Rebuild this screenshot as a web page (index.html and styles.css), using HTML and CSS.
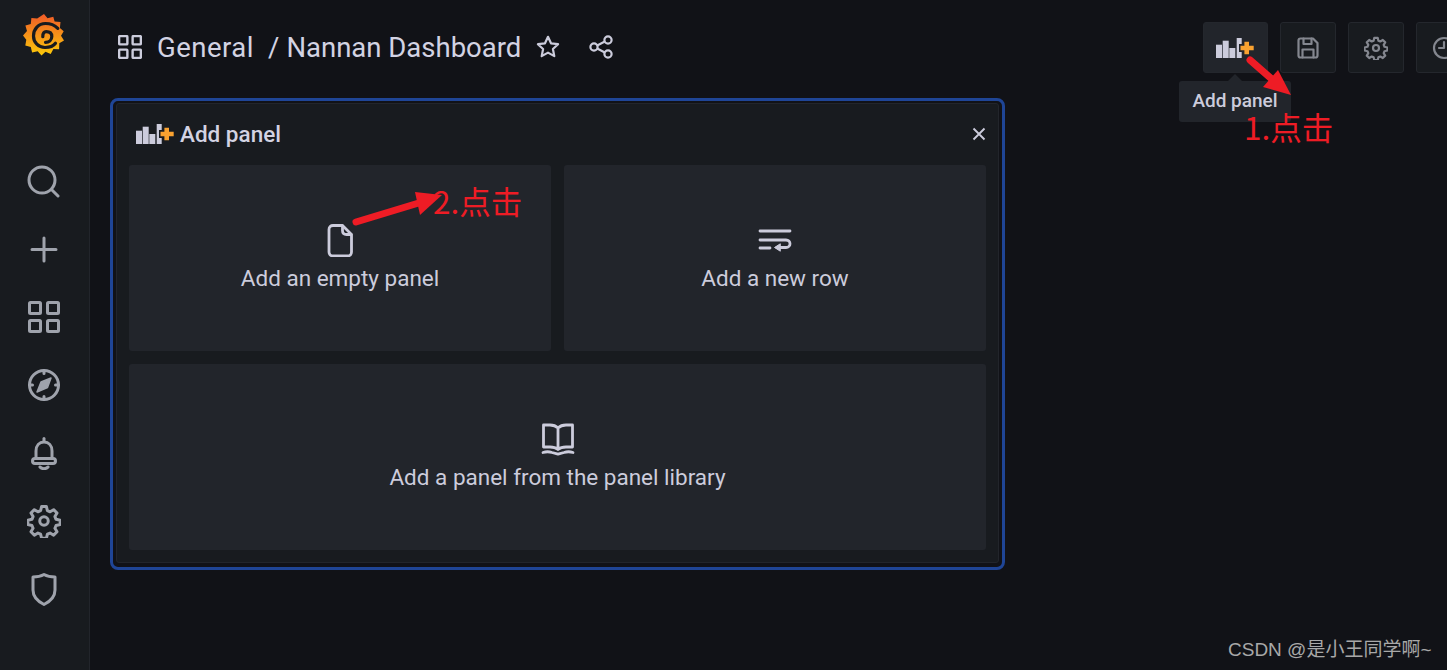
FILE: index.html
```html
<!DOCTYPE html>
<html lang="en">
<head>
<meta charset="utf-8">
<title>Nannan Dashboard</title>
<link rel="stylesheet" href="styles.css">
</head>
<body>
<svg class="defs" width="0" height="0" aria-hidden="true">
  <defs>
    <linearGradient id="sun" x1="0" y1="0" x2="0" y2="1">
      <stop offset="0" stop-color="#f05a28"/>
      <stop offset="1" stop-color="#fbca0a"/>
    </linearGradient>
    <symbol id="grid" viewBox="0 0 32 32">
      <rect x="1.500" y="1.500" width="11" height="11" rx="1"/><rect x="19.500" y="1.500" width="11" height="11" rx="1"/>
      <rect x="1.500" y="19.500" width="11" height="11" rx="1"/><rect x="19.500" y="19.500" width="11" height="11" rx="1"/>
    </symbol>
    <symbol id="gear" viewBox="0 0 24 24">
      <circle cx="12" cy="12" r="3"/>
      <path d="M10.300 1.800h3.400l.7 2.900 1.900.8 2.500-1.500 2.400 2.400-1.500 2.500.8 1.900 2.900.7v3l-2.900.7-.8 1.900 1.500 2.500-2.400 2.400-2.500-1.500-1.900.8-.7 2.900h-3.400l-.7-2.900-1.900-.8-2.500 1.500-2.400-2.400 1.500-2.500-.8-1.900-2.900-.7v-3l2.900-.7.8-1.900-1.500-2.500 2.400-2.400 2.500 1.500 1.900-.8z"/>
    </symbol>
    <symbol id="addpanel" viewBox="0 0 38 20">
      <g class="bars">
        <rect x="0" y="6.700" width="6" height="13.300"/><rect x="6.700" y="2.700" width="6" height="17.300"/>
        <rect x="13.300" y="10" width="6" height="10"/><path d="M20.700 0h5v6h-2.700v8h2.700v6h-5z"/>
      </g>
      <path class="plus" d="M28.400 3.800h4.600v3.900h4.700v4.600h-4.700v3.900h-4.600v-3.900h-3.900v-4.600h3.900z"/>
    </symbol>
  </defs>
</svg>

<nav class="sidebar">
  <div class="logo">
    <svg width="42" height="44" viewBox="0 0 42 44">
      <path fill="url(#sun)" d="M21 0l3.500 4.200 5.800-1.500 1.300 4.800 5.900.5-.6 6 3.800 3.300-2.700 4.500 3 4.800-4.700 2.700-.2 5.900-5.700-.2-2.700 5-5.200-2.300-4 3.800-3.800-4.300-5.600 1.300-1.300-5.500-5.500-1.500 1-5.700L0 21.500l4-4.400-1.600-5.600 5.400-1.600.6-6 5.800.6z"/>
      <path class="spiral" d="M34.800 14.300C31 10.500 26.500 9.500 22.500 9.500 15.500 9.500 10.500 15 10.500 22c0 6.500 5 11.500 11.500 11.500 4.500 0 8.500-1.500 10.500-4.200"/>
      <path class="spiral" d="M19.800 22.700c0-3.200 1.200-5 3.400-5 3.300 0 5.600 1.500 5.600 4.800 0 3.500-2.800 5.800-6.300 5.800"/>
    </svg>
  </div>
  <ul class="nav">
    <li><svg class="ico" viewBox="0 0 34 34"><circle cx="15" cy="16" r="13"/><path d="M25 26l6 6"/></svg></li>
    <li><svg class="ico" viewBox="0 0 34 34"><path d="M17 6v23M5 17.500h24"/></svg></li>
    <li><svg class="ico ico-grid"><use href="#grid"/></svg></li>
    <li><svg class="ico" viewBox="0 0 34 34"><circle cx="17" cy="17" r="14.500"/><path d="M17 2.500v3M17 28.500v3M2.500 17h3M28.500 17h3"/><path class="solid" d="M24 10l-3.500 9.500L10 24l4-10z"/></svg></li>
    <li><svg class="ico" viewBox="0 0 34 34"><path d="M17 2.500v3"/><path d="M9 22.500V15c0-5.500 3.300-9 8-9s8 3.500 8 9v7.500"/><rect x="5.500" y="22.500" width="23" height="5" rx="2.500"/><path d="M13 31c1 1.300 2.500 1.700 4 1.700s3-.4 4-1.700"/></svg></li>
    <li><svg class="ico ico-gear"><use href="#gear"/></svg></li>
    <li><svg class="ico" viewBox="0 0 34 34"><path d="M17 2.500c3 1.700 6.500 2.500 11 2.500v13c0 6.500-4 11-11 14.500C10 29 6 24.500 6 18V5c4.500 0 8-.8 11-2.500z"/></svg></li>
  </ul>
</nav>

<main class="main">
  <header class="topbar">
    <div class="crumbs">
      <svg class="crumb-ico"><use href="#grid"/></svg>
      <h1 class="title"><span class="folder">General</span><span class="slash">/</span>Nannan Dashboard</h1>
      <svg class="act star" viewBox="0 0 24 24"><path d="M12 1.800l3 6.500 7.100.9-5.200 4.800 1.400 7.100L12 17.600l-6.300 3.500 1.400-7.100L1.900 9.200 9 8.300z"/></svg>
      <svg class="act share" viewBox="0 0 24 24"><circle cx="19" cy="5" r="3.600"/><circle cx="5" cy="12" r="3.600"/><circle cx="19" cy="19" r="3.600"/><path d="M8.200 10.400l7.600-3.800M8.200 13.600l7.600 3.800"/></svg>
    </div>
    <div class="tools">
      <button class="tbtn tbtn-add" type="button">
        <svg class="addico"><use href="#addpanel"/></svg>
        <span class="tooltip"><span class="tooltip-text">Add panel</span></span>
      </button>
      <button class="tbtn" type="button"><svg class="tico" viewBox="0 0 24 24"><path d="M2.500 4.500c0-1.200.8-2 2-2h12.500l4.500 4.500v12.500c0 1.200-.8 2-2 2h-15c-1.200 0-2-.8-2-2z"/><path d="M7.500 2.500v5.500h8V2.500M6.500 21.500v-8h11v8"/></svg></button>
      <button class="tbtn" type="button"><svg class="tico"><use href="#gear"/></svg></button>
      <button class="tbtn" type="button"><svg class="tico" viewBox="0 0 24 24"><circle cx="12" cy="12" r="10"/><path d="M12 6v6h-5"/></svg></button>
    </div>
  </header>

  <section class="focus">
    <div class="panel">
      <div class="panel-head">
        <svg class="addico"><use href="#addpanel"/></svg>
        <span class="panel-title">Add panel</span>
        <svg class="close" viewBox="0 0 14 14"><path d="M1.500 1.500l11 11M12.500 1.500l-11 11"/></svg>
      </div>
      <div class="cards">
        <div class="card">
          <svg class="cico" viewBox="0 0 34 34"><path d="M6 6.500c0-2.500 1.800-4 4-4h9.500l9 9v17.500c0 2.500-1.800 4-4 4H10c-2.200 0-4-1.500-4-4z"/><path d="M19.500 3v4.500c0 2.500 1.500 4 4 4h4.500"/></svg>
          <span>Add an empty panel</span>
        </div>
        <div class="card">
          <svg class="cico" viewBox="0 0 34 34"><path d="M2 8h30M2 17h26c2.500 0 4 1.700 4 3.700s-1.500 3.800-4 3.800h-9M2 25h10"/><path class="solid" d="M22 21l-5.500 3.500L22 28z"/></svg>
          <span>Add a new row</span>
        </div>
        <div class="card card-wide">
          <svg class="cico" viewBox="0 0 34 34"><path d="M17 6c-2-2-5-3-8-3H2.500v22H9c3 0 6 .8 8 2.500 2-1.700 5-2.500 8-2.500h6.500V3H25c-3 0-6 1-8 3zM17 6v21.500"/><path d="M2 30.500c3-1 6-1 9 0l6 1.700 6-1.700c3-1 6-1 9 0"/></svg>
          <span>Add a panel from the panel library</span>
        </div>
      </div>
    </div>
  </section>
</main>

<div class="note note-one">1.点击</div>
<div class="note note-two">2.点击</div>
<svg class="marks" width="1447" height="670" viewBox="0 0 1447 670">
  <path class="shaft" d="M1250 60l24 21"/>
  <path class="head" d="M1291 95l-13-25-15 17z"/>
  <path class="shaft" d="M356 222l66-20"/>
  <path class="head" d="M442 195l-27-3 5 23z"/>
</svg>
<div class="watermark">CSDN @是小王同学啊~</div>
</body>
</html>
```
FILE: styles.css
```css
* { box-sizing: border-box; }
html, body { margin: 0; height: 100%; }
body {
  width: 1447px;
  height: 670px;
  overflow: hidden;
  position: relative;
  display: flex;
  background: #111217;
  color: #ccccdc;
  font-family: Roboto, "Noto Sans CJK SC", sans-serif;
}
.defs { position: absolute; }

.sidebar {
  flex: 0 0 90px;
  background: #181b1f;
  border-right: 1px solid #22252b;
  padding-right: 1px;
  display: flex;
  flex-direction: column;
  align-items: center;
}
.logo { height: 147px; padding-top: 14px; }
.logo svg { display: block; }
.spiral { fill: none; stroke: #181b1f; stroke-width: 3.200; stroke-linecap: round; }
.nav { list-style: none; margin: 0; padding: 0; }
.nav li { height: 68px; width: 68px; display: flex; align-items: center; justify-content: center; }
.ico { width: 34px; height: 34px; fill: none; stroke: #9fa3ac; stroke-width: 3; stroke-linecap: round; stroke-linejoin: round; }
.ico-grid { width: 32px; height: 32px; }
.ico-gear { stroke-width: 2.100; }
.ico .solid { fill: #9fa3ac; stroke-width: 1.500; }

.main { flex: 1; min-width: 0; padding: 22px 0 0 20px; }
.topbar { display: flex; height: 51px; }
.crumbs { flex: 0 0 1093px; display: flex; align-items: center; padding: 0 0 2px 8px; }
.crumb-ico { width: 24px; height: 24px; fill: none; stroke: #ccccdc; stroke-width: 3.200; margin-right: 15px; }
.title { margin: 2px 0 0; font-size: 27.500px; line-height: 34px; font-weight: 400; white-space: nowrap; color: #d3d3e3; }
.folder { letter-spacing: .5px; }
.slash { margin: 0 7px 0 14px; }
.act { fill: none; stroke: #ccccdc; stroke-width: 2.200; stroke-linejoin: round; }
.star { width: 24px; height: 24px; margin-left: 15px; }
.share { width: 24px; height: 24px; margin-left: 29px; }

.tools { display: flex; gap: 12px; flex: none; }
.tbtn {
  position: relative;
  width: 56px;
  height: 51px;
  flex: none;
  padding: 0;
  display: flex;
  align-items: center;
  justify-content: center;
  background: #181b1f;
  border: 1px solid #24272d;
  border-radius: 3px;
}
.tbtn-add { width: 65px; padding-right: 2px; background: #22252b; }
.addico { width: 38px; height: 20px; display: block; flex: none; }
.bars { fill: #ccccdc; }
.plus { fill: #f9a230; }
.tico { width: 24px; height: 24px; fill: none; stroke: #84878f; stroke-width: 2.200; stroke-linejoin: round; stroke-linecap: round; }
.tooltip {
  position: absolute;
  left: -25px;
  top: 58px;
  width: 112px;
  height: 41px;
  background: #22252b;
  border-radius: 3px;
  padding-bottom: 2px;
  display: flex;
  align-items: center;
  justify-content: center;
}
.tooltip-text { color: #ccccdc; font: 500 19px/20px Roboto, sans-serif; }
.tooltip::before {
  content: "";
  position: absolute;
  left: 49px;
  top: -7px;
  border-left: 7px solid transparent;
  border-right: 7px solid transparent;
  border-bottom: 7px solid #22252b;
}

.focus {
  margin-top: 25px;
  width: 895px;
  height: 472px;
  padding: 2px 3px 4px;
  border: 3px solid #1f4596;
  border-radius: 8px;
}
.panel {
  height: 100%;
  background: #181b1f;
  border: 1px solid #22252b;
  border-radius: 3px;
  padding: 0 12px;
}
.panel-head { display: flex; align-items: center; height: 61px; padding: 0 0 1px 7px; }
.panel-title { font-size: 22.500px; font-weight: 500; margin-left: 6px; color: #d3d3e3; }
.close { width: 14px; height: 14px; margin-left: auto; fill: none; stroke: #ccccdc; stroke-width: 1.900; }

.cards { display: grid; grid-template-columns: 422px 422px; grid-auto-rows: 186px; gap: 13px; }
.card {
  background: #22252b;
  border-radius: 3px;
  display: flex;
  flex-direction: column;
  align-items: center;
  justify-content: center;
  gap: 8px;
  padding-bottom: 2px;
  font-size: 22.500px;
  line-height: 26px;
}
.card-wide { grid-column: 1 / 3; }
.cico { width: 34px; height: 34px; fill: none; stroke: #ccccdc; stroke-width: 2.800; stroke-linecap: round; stroke-linejoin: round; }
.cico .solid { fill: #ccccdc; stroke-width: 1; }

.note {
  position: absolute;
  color: #ee1c25;
  font: 400 31.500px/28px "Noto Sans CJK SC", "Noto Sans", sans-serif;
  white-space: nowrap;
}
.note-one { left: 1244px; top: 112px; }
.note-two { left: 433px; top: 186px; }
.marks { position: absolute; left: 0; top: 0; pointer-events: none; }
.shaft { stroke: #ee1c25; stroke-width: 7; stroke-linecap: round; fill: none; }
.head { fill: #ee1c25; }
.watermark {
  position: absolute;
  left: 1228px;
  top: 637px;
  font: 19px/25px "Liberation Sans", "Noto Sans CJK SC", sans-serif;
  color: #a8a8a8;
  white-space: nowrap;
}
```
